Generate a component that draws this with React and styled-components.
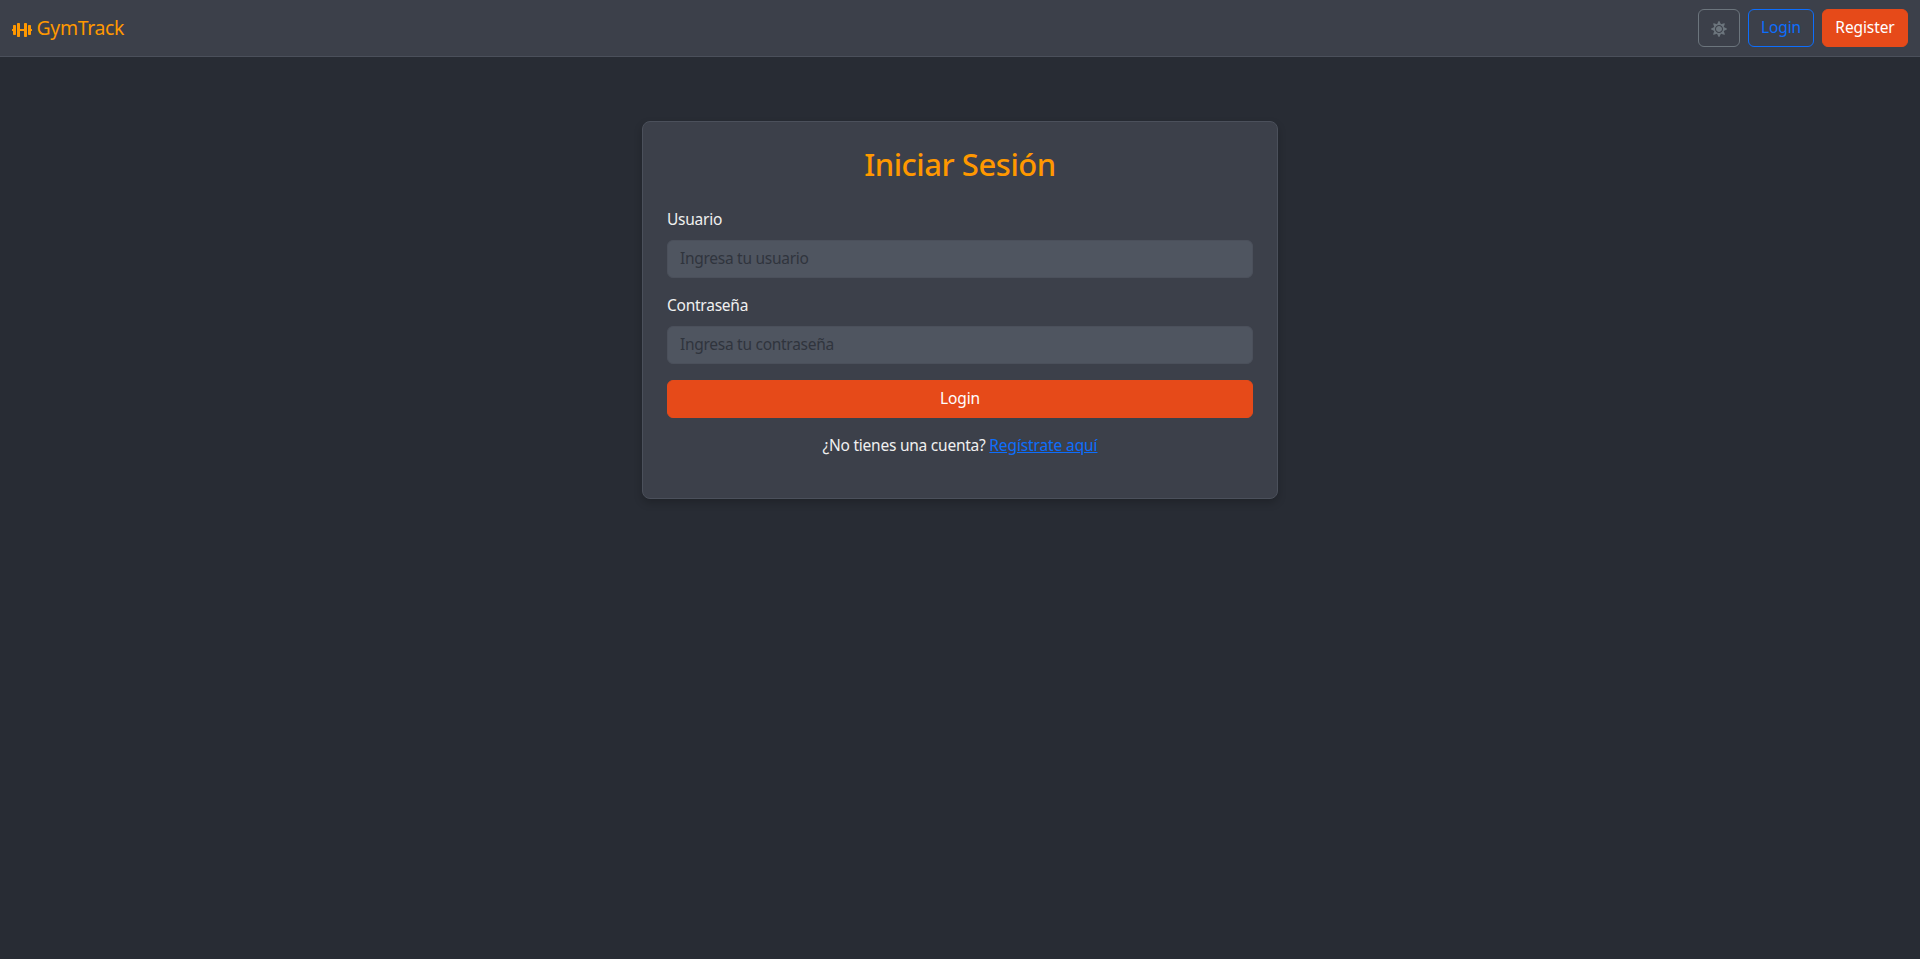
import React from "react";
import styled, { createGlobalStyle, css } from "styled-components";
import { FaDumbbell, FaSun } from "react-icons/fa";

const GlobalStyle = createGlobalStyle`
  *, *::before, *::after { box-sizing: border-box; }
  body {
    margin: 0;
    min-height: 100vh;
    background: #282c34;
    color: #f0f0f0;
    font-family: "Noto Sans", sans-serif;
    font-size: 15.5px;
    line-height: 24px;
  }
`;

const Navbar = styled.nav`
  display: flex;
  align-items: center;
  justify-content: space-between;
  height: 57px;
  padding: 0 12px;
  background: #3c404a;
  border-bottom: 1px solid #4b505b;
`;

const Brand = styled.a`
  display: flex;
  align-items: center;
  gap: 4.6px;
  color: #ff9800;
  font-size: 19.4px;
  line-height: 30px;
  text-decoration: none;
`;

const BrandIcon = styled(FaDumbbell)`
  width: 20px;
  height: 16px;
  margin-top: 4px;
`;

const BrandName = styled.span`
  letter-spacing: -0.35px;
`;

const Actions = styled.div`
  display: flex;
  gap: 8px;
`;

const variants = {
  primary: css`
    color: #fff;
    background: #e64a19;
    border-color: #e64a19;
  `,
  outline: css`
    color: #0d6efd;
    background: transparent;
    border-color: #0d6efd;
  `,
  muted: css`
    color: #6c757d;
    background: transparent;
    border-color: #6c757d;
  `,
};

const Button = styled.button`
  display: flex;
  align-items: center;
  justify-content: center;
  width: ${(p) => p.$width || "100%"};
  height: 38px;
  padding: 0 0 2px;
  border: 1px solid;
  border-radius: 6px;
  font: inherit;
  letter-spacing: -0.1px;
  cursor: pointer;
  ${(p) => variants[p.$variant]}
`;

const ThemeIcon = styled(FaSun)`
  width: 16px;
  height: 16px;
  margin-top: 4px;
`;

const Main = styled.main`
  display: flex;
  justify-content: center;
  padding-top: 64px;
`;

const Card = styled.form`
  width: 636px;
  padding: 24px;
  background: #3c404a;
  border: 1px solid #4b505b;
  border-radius: 8px;
  box-shadow: 0 4px 8px rgba(0, 0, 0, 0.2);
`;

const Title = styled.h2`
  margin: -1px 0 24px;
  color: #ff9800;
  font-size: 31px;
  font-weight: 500;
  letter-spacing: -0.45px;
  line-height: 38.4px;
  text-align: center;
`;

const Field = styled.div`
  margin-bottom: 15px;
`;

const Label = styled.label`
  display: block;
  margin-bottom: 9px;
  letter-spacing: -0.25px;
`;

const Input = styled.input`
  display: block;
  width: 100%;
  height: 38px;
  padding: 5px 12px 7px;
  color: #f0f0f0;
  background: #4f5560;
  border: 1px solid #4b505b;
  border-radius: 6px;
  font: inherit;
  letter-spacing: -0.28px;
  outline: none;

  &::placeholder {
    color: #30343d;
    opacity: 1;
  }
`;

const SubmitButton = styled(Button)`
  margin-top: 16px;
`;

const Prompt = styled.p`
  margin: 15px 0 17px;
  letter-spacing: -0.24px;
  text-align: center;
`;

const Link = styled.a`
  color: #0d6efd;
  letter-spacing: -0.12px;
  text-decoration: underline;
`;

export default function App() {
  return (
    <>
      <GlobalStyle />
      <Navbar>
        <Brand href="#">
          <BrandIcon />
          <BrandName>GymTrack</BrandName>
        </Brand>
        <Actions>
          <Button $variant="muted" $width="42px" aria-label="Tema">
            <ThemeIcon />
          </Button>
          <Button $variant="outline" $width="66px">Login</Button>
          <Button $variant="primary" $width="86px">Register</Button>
        </Actions>
      </Navbar>
      <Main>
        <Card>
          <Title>Iniciar Sesión</Title>
          <Field>
            <Label htmlFor="user">Usuario</Label>
            <Input id="user" placeholder="Ingresa tu usuario" />
          </Field>
          <Field>
            <Label htmlFor="password">Contraseña</Label>
            <Input id="password" type="password" placeholder="Ingresa tu contraseña" />
          </Field>
          <SubmitButton type="button" $variant="primary">Login</SubmitButton>
          <Prompt>
            ¿No tienes una cuenta? <Link href="#">Regístrate aquí</Link>
          </Prompt>
        </Card>
      </Main>
    </>
  );
}
